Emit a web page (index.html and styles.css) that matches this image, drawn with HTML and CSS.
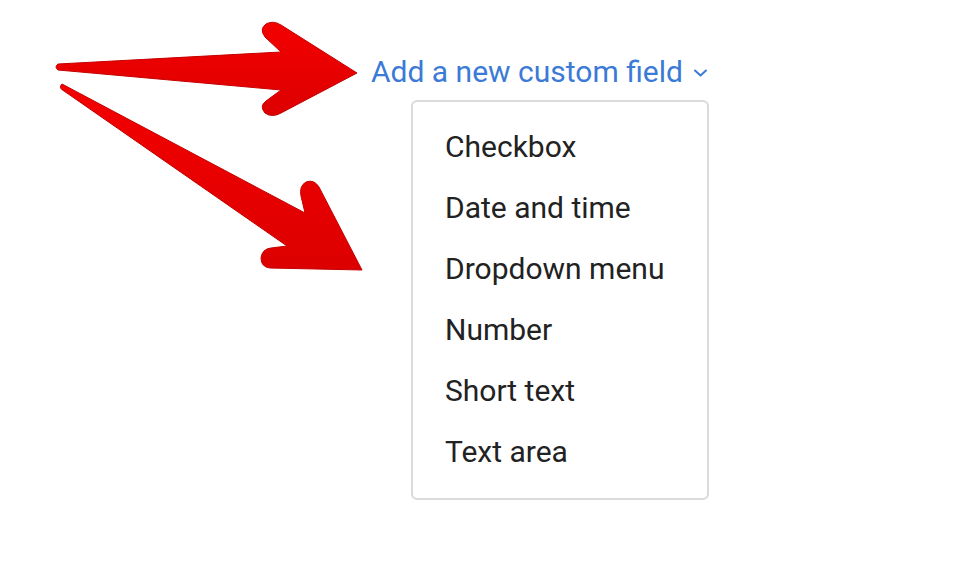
FILE: index.html
```html
<!DOCTYPE html>
<html>
<head>
    <title>Custom fields</title>
    <link rel="stylesheet" href="styles.css">
</head>
<body>

    <!-- red callout arrows drawn over the page -->
    <svg class="callouts" width="958" height="568" viewBox="0 0 958 568">
        <defs>
            <linearGradient id="redFill" x1="0" y1="0" x2="0" y2="1">
                <stop offset="0" stop-color="#f40000"/>
                <stop offset="1" stop-color="#dc0000"/>
            </linearGradient>
        </defs>
        <path d="M58,64 L281,52 L265,37 Q259,29 266,24 Q273,20 281,25 L357,73 L281,113 Q272,118 265,113 Q259,106 266,101 L281,90 L58,70 Q54,67 58,64 Z"
              fill="url(#redFill)" stroke="#c40000" stroke-width="1"/>
        <path d="M62,84 L305,213 L301,196 Q299,186 306,182 Q314,179 319,187 L362,270 L270,268 Q261,267 261,258 Q262,249 271,248 L287,246 L64,91 Q58,88 62,84 Z"
              fill="url(#redFill)" stroke="#c40000" stroke-width="1"/>
    </svg>

    <div class="page">
        <a class="add-field" href="#">
            Add a new custom field
            <svg class="chevron" width="15" height="10" viewBox="0 0 15 10">
                <path d="M2,2.5 L7.5,7.5 L13,2.5" fill="none" stroke="currentColor" stroke-width="2" stroke-linecap="round" stroke-linejoin="round"/>
            </svg>
        </a>

        <ul class="field-menu">
            <li>Checkbox</li>
            <li>Date and time</li>
            <li>Dropdown menu</li>
            <li>Number</li>
            <li>Short text</li>
            <li>Text area</li>
        </ul>
    </div>

</body>
</html>
```

FILE: styles.css
```css
body {
    font-family: Roboto, "Noto Sans", sans-serif;
    background-color: #fff;
    margin: 0;
    color: #222;
}

.callouts {
    position: absolute;
    top: 0;
    left: 0;
    pointer-events: none;
}

.page {
    padding: 54px 0 0 371px;
}

.add-field {
    display: flex;
    align-items: center;
    gap: 10px;
    font-size: 30px;
    line-height: 36px;
    color: #3b7ad6;
    text-decoration: none;
}

.chevron {
    margin-top: 2px;
}

.field-menu {
    list-style: none;
    margin: 10px 0 0 40px;
    padding: 14px 0 16px 32px;
    width: 298px;
    box-sizing: border-box;
    border: 2px solid #dadada;
    border-radius: 6px;
}

.field-menu li {
    font-size: 30px;
    line-height: 61px;
    color: #222;
}
```
